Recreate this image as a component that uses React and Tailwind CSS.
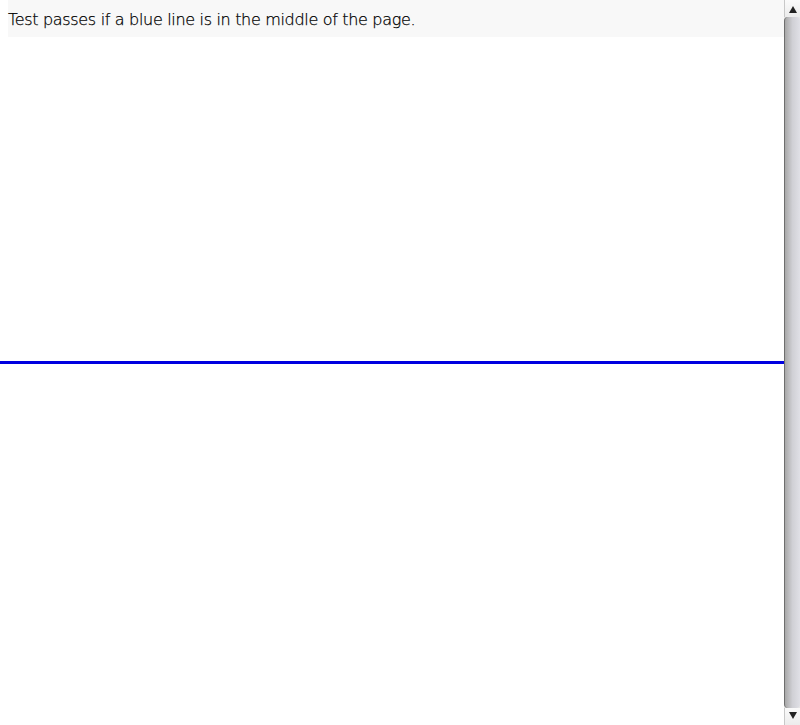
export default function App() {
  return (
    <div className="flex h-[725px] w-[800px] overflow-hidden bg-white">
      <div className="flex flex-1 flex-col">
        <div className="ml-2 flex h-[37px] items-center bg-[#f8f8f8] pt-[2px] text-[16px] tracking-[-0.32px] text-black">
          <span className="font-['DejaVu_Sans',sans-serif] font-extralight [-webkit-text-stroke:0.25px_black]">Test passes if a blue line is in the middle of the page.</span>
        </div>
        <div className="h-[324px]" />
        <div className="h-[3px] bg-[#0000e0]" />
      </div>
      <div className="flex w-4 flex-col bg-[#e6e6e6]">
        <div className="flex h-[17px] items-center justify-center border-l border-[#c8c8c8] bg-gradient-to-b from-[#fafafa] to-[#ececec] pt-[2px]">
          <svg width="8" height="7" viewBox="0 0 8 7"><path d="M4 0 L8 7 L0 7 Z" fill="#222" /></svg>
        </div>
        <div className="flex-1 rounded-t-[4px] rounded-b-[4px] border-l border-[#6e6e6e] bg-gradient-to-r from-[#a8a8a8] via-[#d0d0d5] to-[#e0e0e6]" />
        <div className="flex h-[17px] items-center justify-center border-l border-[#c8c8c8] bg-gradient-to-b from-[#fafafa] to-[#ececec] pb-[2px]">
          <svg width="8" height="7" viewBox="0 0 8 7"><path d="M0 0 L8 0 L4 7 Z" fill="#222" /></svg>
        </div>
      </div>
    </div>
  );
}
